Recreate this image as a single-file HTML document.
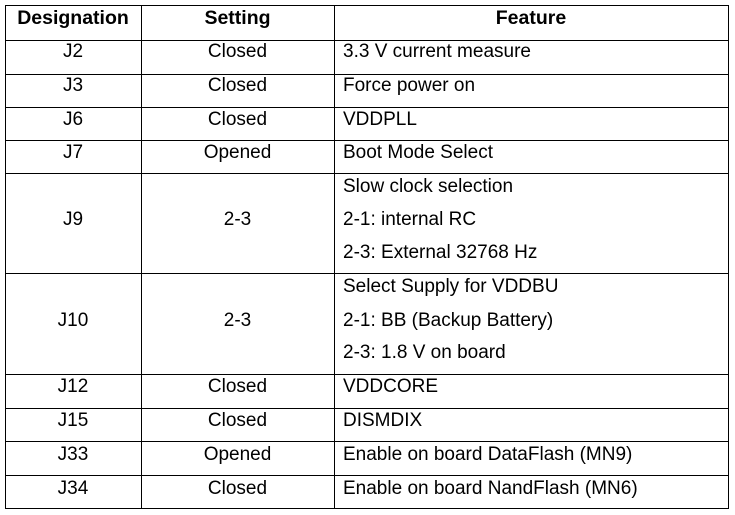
<!DOCTYPE html>
<html><head><style>
body{margin:0;width:735px;height:515px;background:#fff;position:relative;font-family:"Liberation Sans",Arial,sans-serif;font-size:19px;color:#000;overflow:hidden}
.h{position:absolute;left:5px;width:724px;height:1px;background:#000}
.v{position:absolute;top:5px;height:504px;width:1px;background:#000}
.t{position:absolute;line-height:20px;white-space:nowrap;margin-top:1px}
.c1{left:5px;width:136px;text-align:center}
.c2{left:141px;width:193px;text-align:center}
.c3{left:343px}
b{font-weight:bold;font-size:19.5px}
</style></head><body>
<div class="h" style="top:5px"></div>
<div class="h" style="top:40px"></div>
<div class="h" style="top:74px"></div>
<div class="h" style="top:107px"></div>
<div class="h" style="top:140px"></div>
<div class="h" style="top:173px"></div>
<div class="h" style="top:273px"></div>
<div class="h" style="top:374px"></div>
<div class="h" style="top:408px"></div>
<div class="h" style="top:441px"></div>
<div class="h" style="top:475px"></div>
<div class="h" style="top:508px"></div>
<div class="v" style="left:5px"></div>
<div class="v" style="left:141px"></div>
<div class="v" style="left:334px"></div>
<div class="v" style="left:728px"></div>

<div class="t c1" style="top:7px"><b>Designation</b></div>
<div class="t c2" style="top:7px"><b>Setting</b></div>
<div class="t" style="left:334px;width:394px;text-align:center;top:7px"><b>Feature</b></div>

<div class="t c1" style="top:41px">J2</div><div class="t c2" style="top:41px">Closed</div><div class="t c3" style="top:41px">3.3 V current measure</div>
<div class="t c1" style="top:75px">J3</div><div class="t c2" style="top:75px">Closed</div><div class="t c3" style="top:75px">Force power on</div>
<div class="t c1" style="top:109px">J6</div><div class="t c2" style="top:109px">Closed</div><div class="t c3" style="top:109px">VDDPLL</div>
<div class="t c1" style="top:142px">J7</div><div class="t c2" style="top:142px">Opened</div><div class="t c3" style="top:142px">Boot Mode Select</div>

<div class="t c1" style="top:209px">J9</div><div class="t c2" style="top:209px">2-3</div>
<div class="t c3" style="top:176px">Slow clock selection</div>
<div class="t c3" style="top:209px">2-1: internal RC</div>
<div class="t c3" style="top:242px">2-3: External 32768 Hz</div>

<div class="t c1" style="top:310px">J10</div><div class="t c2" style="top:310px">2-3</div>
<div class="t c3" style="top:276px">Select Supply for VDDBU</div>
<div class="t c3" style="top:310px">2-1: BB (Backup Battery)</div>
<div class="t c3" style="top:342px">2-3: 1.8 V on board</div>

<div class="t c1" style="top:376px">J12</div><div class="t c2" style="top:376px">Closed</div><div class="t c3" style="top:376px">VDDCORE</div>
<div class="t c1" style="top:410px">J15</div><div class="t c2" style="top:410px">Closed</div><div class="t c3" style="top:410px">DISMDIX</div>
<div class="t c1" style="top:444px">J33</div><div class="t c2" style="top:444px">Opened</div><div class="t c3" style="top:444px">Enable on board DataFlash (MN9)</div>
<div class="t c1" style="top:478px">J34</div><div class="t c2" style="top:478px">Closed</div><div class="t c3" style="top:478px">Enable on board NandFlash (MN6)</div>
</body></html>
